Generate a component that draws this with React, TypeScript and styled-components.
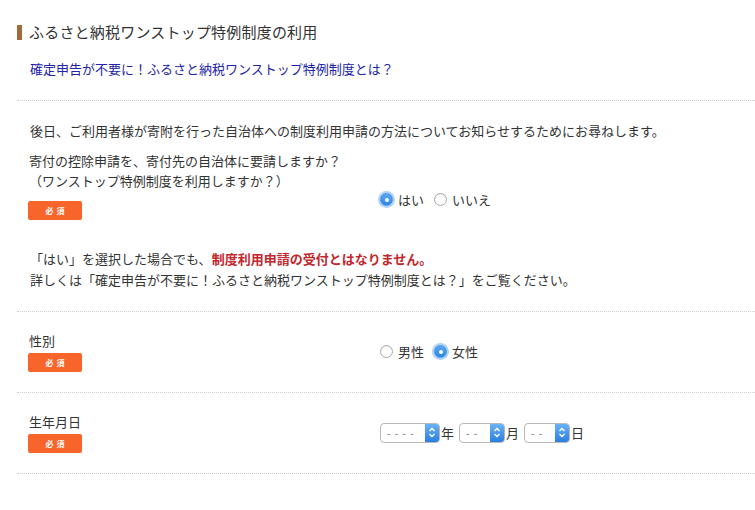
import React from 'react';
import styled, { createGlobalStyle } from 'styled-components';

const GlobalStyle = createGlobalStyle`
  body {
    margin: 0;
    background: #fff;
    color: #333;
    font-family: "Noto Sans CJK JP", "Liberation Sans", sans-serif;
  }
`;

const Page = styled.div`
  width: 755px;
  padding: 22px 0 0 17px;
  box-sizing: border-box;
`;

const Heading = styled.h2`
  margin: 0;
  display: flex;
  align-items: center;
  gap: 7px;
  font-size: 15px;
  line-height: 20px;
  font-weight: 400;
  color: #333;
  letter-spacing: 0.2px;

  &::before {
    content: '';
    width: 5px;
    height: 15px;
    background: #a4693b;
  }
`;

const IntroLink = styled.a`
  display: block;
  margin: 17px 0 21px 13px;
  font-size: 13px;
  line-height: 20px;
  color: #2323a8;
  text-decoration: none;
`;

const Block = styled.div<{ $top: number; $bottom: number }>`
  border-top: 1px dotted #cfcfcf;
  padding: ${(p) => p.$top}px 0 ${(p) => p.$bottom}px 11px;

  &:last-child {
    border-bottom: 1px dotted #cfcfcf;
  }
`;

const Para = styled.p`
  margin: 0 0 10px 2px;
  font-size: 13px;
  line-height: 20px;
`;

const Row = styled.div`
  display: flex;
  align-items: center;
`;

const LabelCol = styled.div`
  width: 352px;
  flex-shrink: 0;
`;

const LabelText = styled.div`
  font-size: 13px;
  line-height: 20px;
  margin-left: 1px;
`;

const Required = styled.span<{ $gap: number }>`
  display: flex;
  align-items: center;
  justify-content: center;
  width: 54px;
  height: 19px;
  margin-top: ${(p) => p.$gap}px;
  background: #f7652a;
  border-radius: 2px;
  color: #fff;
  font-size: 8px;
  font-weight: 700;
  letter-spacing: 3px;
  text-indent: 3px;
`;

const FieldCol = styled.div<{ $pad?: number }>`
  display: flex;
  align-items: center;
  padding-top: ${(p) => p.$pad ?? 0}px;
  font-size: 13px;
`;

const RadioLabel = styled.label`
  display: flex;
  align-items: center;
  gap: 5px;
  margin-right: 10px;
`;

const RadioDot = styled.span<{ $on?: boolean }>`
  width: 13px;
  height: 13px;
  box-sizing: border-box;
  border-radius: 50%;
  display: inline-flex;
  align-items: center;
  justify-content: center;
  border: 1px solid ${(p) => (p.$on ? '#3a8ee6' : '#a9a9a9')};
  background: ${(p) => (p.$on ? 'linear-gradient(#5aa8f2, #2f86e3)' : '#fff')};
  box-shadow: ${(p) => (p.$on ? '0 0 0 2px rgba(80, 150, 230, 0.45)' : 'inset 0 1px 1px rgba(0,0,0,0.08)')};

  &::after {
    content: '';
    display: ${(p) => (p.$on ? 'block' : 'none')};
    width: 4px;
    height: 4px;
    border-radius: 50%;
    background: #fff;
  }
`;

const Notice = styled.p`
  margin: 28px 0 0 2px;
  font-size: 13px;
  line-height: 21px;
`;

const Warn = styled.strong`
  color: #c1272d;
  font-weight: 700;
`;

const SelectBox = styled.span<{ $w: number }>`
  display: inline-flex;
  align-items: stretch;
  width: ${(p) => p.$w}px;
  height: 20px;
  box-sizing: border-box;
  border: 1px solid #b8b8b8;
  border-radius: 4px;
  overflow: hidden;
  background: #fff;
`;

const SelectValue = styled.span`
  flex: 1;
  display: flex;
  align-items: center;
  padding-left: 6px;
  font-size: 10px;
  color: #666;
  letter-spacing: 1px;
  white-space: pre;
`;

const SelectArrow = styled.span`
  width: 14px;
  display: flex;
  align-items: center;
  justify-content: center;
  background: linear-gradient(#6cb2f6, #2a7ee0);
`;

const Unit = styled.span`
  font-size: 13px;
  margin: 0 5px 0 1px;
`;

const Chevrons = () => (
  <svg width="8" height="11" viewBox="0 0 8 11">
    <path d="M1.5 4 L4 1.5 L6.5 4 M1.5 7 L4 9.5 L6.5 7" fill="none" stroke="#fff" strokeWidth="1.4" />
  </svg>
);

const FakeSelect: React.FC<{ width: number; value: string }> = ({ width, value }) => (
  <SelectBox $w={width}>
    <SelectValue>{value}</SelectValue>
    <SelectArrow>
      <Chevrons />
    </SelectArrow>
  </SelectBox>
);

const Radio: React.FC<{ on?: boolean; label: string }> = ({ on, label }) => (
  <RadioLabel>
    <RadioDot $on={on} />
    {label}
  </RadioLabel>
);

const App: React.FC = () => {
  return (
    <Page>
      <GlobalStyle />
      <Heading>ふるさと納税ワンストップ特例制度の利用</Heading>
      <IntroLink href="#">確定申告が不要に！ふるさと納税ワンストップ特例制度とは？</IntroLink>

      <Block $top={20} $bottom={21}>
        <Para>後日、ご利用者様が寄附を行った自治体への制度利用申請の方法についてお知らせするためにお尋ねします。</Para>
        <Row>
          <LabelCol>
            <LabelText>
              寄付の控除申請を、寄付先の自治体に要請しますか？
              <br />
              （ワンストップ特例制度を利用しますか？）
            </LabelText>
            <Required $gap={10}>必須</Required>
          </LabelCol>
          <FieldCol $pad={28}>
            <Radio on label="はい" />
            <Radio label="いいえ" />
          </FieldCol>
        </Row>
        <Notice>
          「はい」を選択した場合でも、<Warn>制度利用申請の受付とはなりません。</Warn>
          <br />
          詳しくは「確定申告が不要に！ふるさと納税ワンストップ特例制度とは？」をご覧ください。
        </Notice>
      </Block>

      <Block $top={19} $bottom={20}>
        <Row>
          <LabelCol>
            <LabelText>性別</LabelText>
            <Required $gap={2}>必須</Required>
          </LabelCol>
          <FieldCol>
            <Radio label="男性" />
            <Radio on label="女性" />
          </FieldCol>
        </Row>
      </Block>

      <Block $top={19} $bottom={20}>
        <Row>
          <LabelCol>
            <LabelText>生年月日</LabelText>
            <Required $gap={2}>必須</Required>
          </LabelCol>
          <FieldCol>
            <FakeSelect width={60} value="- - - -" />
            <Unit>年</Unit>
            <FakeSelect width={46} value="- -" />
            <Unit>月</Unit>
            <FakeSelect width={46} value="- -" />
            <Unit>日</Unit>
          </FieldCol>
        </Row>
      </Block>
    </Page>
  );
};

export default App;
